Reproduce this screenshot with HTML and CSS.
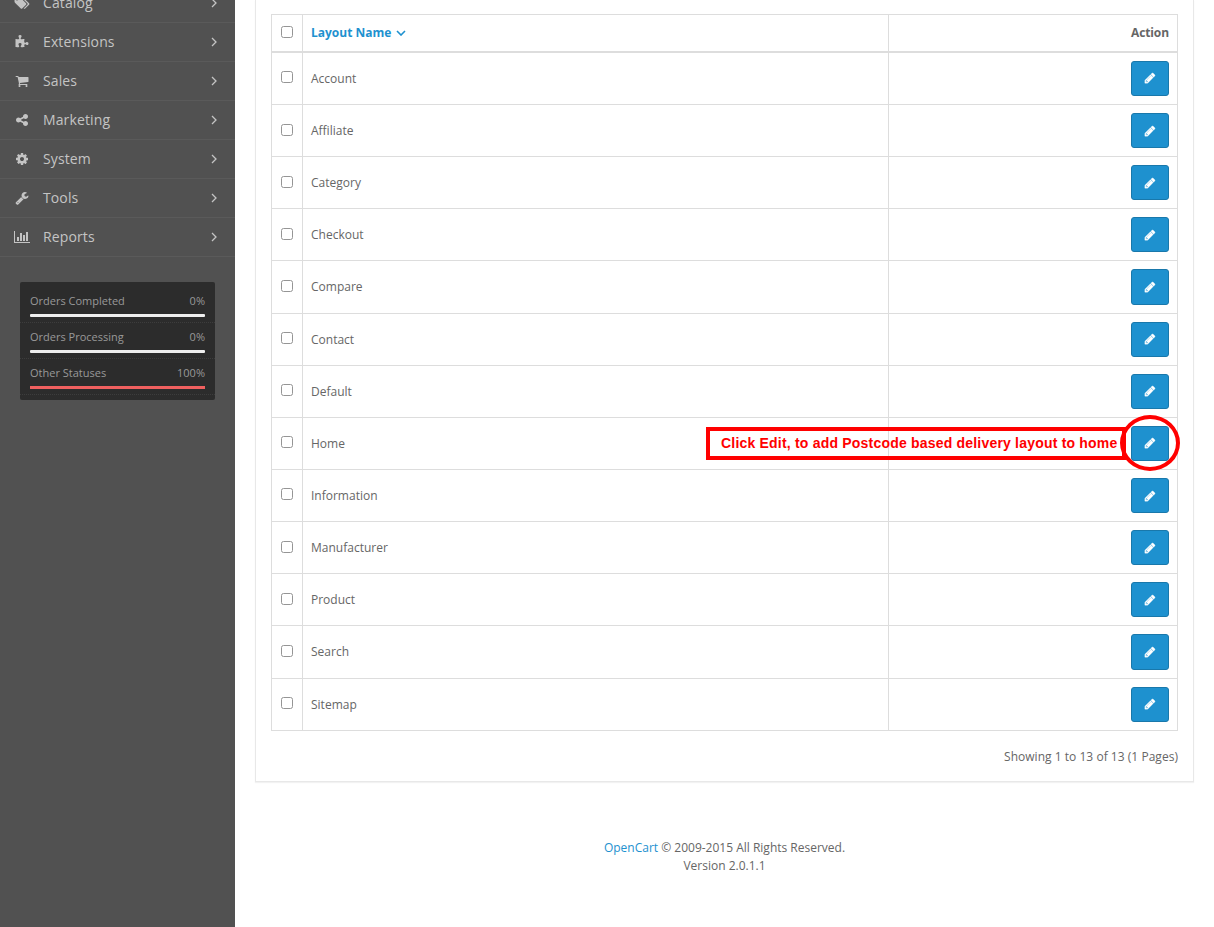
FILE: index.html
```html
<!DOCTYPE html>
<html lang="en">
<head>
<meta charset="utf-8">
<title>Layouts</title>
<link rel="stylesheet" href="styles.css">
</head>
<body>
<svg class="defs" width="0" height="0">
  <symbol id="pencil" viewBox="0 0 1792 1792"><path d="M491 1536l91-91-235-235-91 91v107h128v128h107zm523-928q0-22-22-22-10 0-17 7l-542 542q-7 7-7 17 0 22 22 22 10 0 17-7l542-542q7-7 7-17zm-54-192l416 416-832 832h-416v-416zm683 96q0 53-37 90l-166 166-416-416 166-165q36-38 90-38 53 0 91 38l235 234q37 39 37 91z"/></symbol>
  <symbol id="angle" viewBox="0 0 6 10"><path d="M1 1l4 4-4 4" fill="none" stroke="currentColor" stroke-width="1.3"/></symbol>
</svg>
<div class="page">
  <aside class="sidebar">
    <ul class="menu">
      <li><svg class="icon" viewBox="0 0 1920 1792"><path d="M448 448q0-53-37.500-90.500t-90.500-37.500-90.500 37.500-37.500 90.500 37.500 90.500 90.500 37.500 90.500-37.500 37.500-90.500zm1067 576q0 53-37 90l-491 492q-39 37-91 37-53 0-90-37l-715-716q-38-37-64.500-101t-26.500-117v-416q0-52 38-90t90-38h416q53 0 117 26.500t102 64.500l715 714q37 39 37 91zm384 0q0 53-37 90l-491 492q-39 37-91 37-36 0-59-14t-53-45l470-470q37-37 37-90 0-52-37-91l-715-714q-38-38-102-64.500t-117-26.500h224q53 0 117 26.500t102 64.500l715 714q37 39 37 91z"/></svg><span>Catalog</span><svg class="angle"><use href="#angle"/></svg></li>
      <li><svg class="icon" viewBox="0 0 1792 1792"><path d="M1728 1098q0 81-44.500 135t-123.500 54q-41 0-77.500-17.500t-59-38-56.500-38-71-17.500q-110 0-110 124 0 39 16 115t15 115v5q-22 0-33 1-34 3-97.500 11.500t-115.500 13.500-98 5q-61 0-103-26.500t-42-83.500q0-37 17.500-71t38-56.500 38-59 17.500-77.500q0-79-54-123.500t-135-44.500q-84 0-143 45.500t-59 127.500q0 43 15 83t33.500 64.500 33.500 53 15 50.500q0 45-46 89-37 35-117 35-95 0-245-24-9-2-27.500-4t-27.500-4l-13-2q-1 0-3-1-2 0-2-1v-1024q2 1 17.500 3.500t34 5 21.500 3.500q150 24 245 24 80 0 117-35 46-44 46-89 0-22-15-50.500t-33.500-53-33.500-64.500-15-83q0-82 59-127.500t144-45.500q80 0 134 44.500t54 123.500q0 41-17.500 77.500t-38 59-38 56.500-17.500 71q0 57 42 83.500t103 26.500q64 0 180-15t163-17v2q-1 2-3.500 17.500t-5 34-3.500 21.500q-24 150-24 245 0 80 35 117 44 46 89 46 22 0 50.500-15t53-33.500 64.500-33.500 83-15q82 0 127.500 59t45.500 143z"/></svg><span>Extensions</span><svg class="angle"><use href="#angle"/></svg></li>
      <li><svg class="icon" viewBox="0 0 1792 1792"><path d="M704 1536q0 52-38 90t-90 38-90-38-38-90 38-90 90-38 90 38 38 90zm896 0q0 52-38 90t-90 38-90-38-38-90 38-90 90-38 90 38 38 90zm128-1088v512q0 24-16.500 42.500t-40.500 21.500l-1044 122q13 60 13 70 0 16-24 64h920q26 0 45 19t19 45-19 45-45 19h-1024q-26 0-45-19t-19-45q0-11 8-31.500t16-36 21.500-40 15.500-29.500l-177-823h-204q-26 0-45-19t-19-45 19-45 45-19h256q16 0 28.500 6.500t19.500 15.500 13 24.500 8 26 5.500 29.500 4.500 26h1201q26 0 45 19t19 45z"/></svg><span>Sales</span><svg class="angle"><use href="#angle"/></svg></li>
      <li><svg class="icon" viewBox="0 0 1792 1792"><path d="M1344 1024q133 0 226.500 93.500t93.500 226.500-93.500 226.500-226.500 93.500-226.500-93.500-93.500-226.500q0-12 2-34l-360-180q-92 86-218 86-133 0-226.500-93.500t-93.500-226.500 93.500-226.500 226.500-93.500q126 0 218 86l360-180q-2-22-2-34 0-133 93.500-226.500t226.500-93.500 226.500 93.500 93.500 226.500-93.500 226.500-226.500 93.500q-126 0-218-86l-360 180q2 22 2 34t-2 34l360 180q92-86 218-86z"/></svg><span>Marketing</span><svg class="angle"><use href="#angle"/></svg></li>
      <li><svg class="icon" viewBox="0 0 1792 1792"><path d="M1152 896q0-106-75-181t-181-75-181 75-75 181 75 181 181 75 181-75 75-181zm512-109v222q0 12-8 23t-20 13l-185 28q-19 54-39 91 35 50 107 138 10 12 10 25t-9 23q-27 37-99 108t-94 71q-12 0-26-9l-138-108q-44 23-91 38-16 136-29 186-7 28-36 28h-222q-14 0-24.500-8.500t-11.500-21.500l-28-184q-49-16-90-37l-141 107q-10 9-25 9-14 0-25-11-126-114-165-168-7-10-7-23 0-12 8-23 15-21 51-66.500t54-70.500q-27-50-41-99l-183-27q-13-2-21-12.500t-8-23.500v-222q0-12 8-23t19-13l186-28q14-46 39-92-40-57-107-138-10-12-10-24 0-10 9-23 26-36 98.500-107.500t94.500-71.500q13 0 26 10l138 107q44-23 91-38 16-136 29-186 7-28 36-28h222q14 0 24.500 8.500t11.500 21.500l28 184q49 16 90 37l142-107q9-9 24-9 13 0 25 10 129 119 165 170 7 8 7 22 0 12-8 23-15 21-51 66.500t-54 70.500q26 50 41 98l183 28q13 2 21 12.500t8 23.500z"/></svg><span>System</span><svg class="angle"><use href="#angle"/></svg></li>
      <li><svg class="icon" viewBox="0 0 1792 1792"><path d="M448 1472q0-26-19-45t-45-19-45 19-19 45 19 45 45 19 45-19 19-45zm644-420l-682 682q-37 37-90 37-52 0-91-37l-106-108q-38-36-38-90 0-53 38-91l681-681q39 98 114.500 173.500t173.500 114.500zm634-435q0 39-23 106-47 134-164.500 217.500t-258.500 83.500q-185 0-316.500-131.500t-131.500-316.500 131.500-316.500 316.500-131.500q58 0 121.500 16.500t107.500 46.500q16 11 16 28t-16 28l-293 169v224l193 107q5-3 79-48.500t135.500-81 70.500-35.500q15 0 23.500 10t8.500 25z"/></svg><span>Tools</span><svg class="angle"><use href="#angle"/></svg></li>
      <li><svg class="icon" viewBox="0 0 2048 1792"><path d="M640 896v512h-256v-512h256zm384-512v1024h-256v-1024h256zm1024 1152v128h-2048v-1536h128v1408h1920zm-640-896v768h-256v-768h256zm384-384v1152h-256v-1152h256z"/></svg><span>Reports</span><svg class="angle"><use href="#angle"/></svg></li>
    </ul>
    <div class="stats">
      <div class="stat"><div class="stat-text"><span>Orders Completed</span><span>0%</span></div><div class="bar"></div></div>
      <div class="stat"><div class="stat-text"><span>Orders Processing</span><span>0%</span></div><div class="bar"></div></div>
      <div class="stat"><div class="stat-text"><span>Other Statuses</span><span>100%</span></div><div class="bar bar-full"></div></div>
    </div>
  </aside>
  <main class="content">
    <section class="panel">
      <div class="table">
        <div class="row head"><div class="check"><input type="checkbox"></div><div class="name"><a>Layout Name</a><svg class="caret" viewBox="0 0 10 6"><path d="M1 1l4 4 4-4"/></svg></div><div class="action">Action</div></div>
        <div class="row"><div class="check"><input type="checkbox"></div><div class="name">Account</div><div class="action"><button class="edit"><svg><use href="#pencil"/></svg></button></div></div>
        <div class="row"><div class="check"><input type="checkbox"></div><div class="name">Affiliate</div><div class="action"><button class="edit"><svg><use href="#pencil"/></svg></button></div></div>
        <div class="row"><div class="check"><input type="checkbox"></div><div class="name">Category</div><div class="action"><button class="edit"><svg><use href="#pencil"/></svg></button></div></div>
        <div class="row"><div class="check"><input type="checkbox"></div><div class="name">Checkout</div><div class="action"><button class="edit"><svg><use href="#pencil"/></svg></button></div></div>
        <div class="row"><div class="check"><input type="checkbox"></div><div class="name">Compare</div><div class="action"><button class="edit"><svg><use href="#pencil"/></svg></button></div></div>
        <div class="row"><div class="check"><input type="checkbox"></div><div class="name">Contact</div><div class="action"><button class="edit"><svg><use href="#pencil"/></svg></button></div></div>
        <div class="row"><div class="check"><input type="checkbox"></div><div class="name">Default</div><div class="action"><button class="edit"><svg><use href="#pencil"/></svg></button></div></div>
        <div class="row"><div class="check"><input type="checkbox"></div><div class="name">Home</div><div class="action"><button class="edit"><svg><use href="#pencil"/></svg></button></div></div>
        <div class="row"><div class="check"><input type="checkbox"></div><div class="name">Information</div><div class="action"><button class="edit"><svg><use href="#pencil"/></svg></button></div></div>
        <div class="row"><div class="check"><input type="checkbox"></div><div class="name">Manufacturer</div><div class="action"><button class="edit"><svg><use href="#pencil"/></svg></button></div></div>
        <div class="row"><div class="check"><input type="checkbox"></div><div class="name">Product</div><div class="action"><button class="edit"><svg><use href="#pencil"/></svg></button></div></div>
        <div class="row"><div class="check"><input type="checkbox"></div><div class="name">Search</div><div class="action"><button class="edit"><svg><use href="#pencil"/></svg></button></div></div>
        <div class="row"><div class="check"><input type="checkbox"></div><div class="name">Sitemap</div><div class="action"><button class="edit"><svg><use href="#pencil"/></svg></button></div></div>
      </div>
      <div class="results">Showing 1 to 13 of 13 (1 Pages)</div>
    </section>
    <footer class="footer"><a>OpenCart</a> © 2009-2015 All Rights Reserved.<br>Version 2.0.1.1</footer>
  </main>
  <div class="callout">Click Edit, to add Postcode based delivery layout to home</div>
  <div class="ring"></div>
</div>
</body>
</html>
```
FILE: styles.css
```css
* { box-sizing: border-box; }
body {
  margin: 0;
  font-family: "Open Sans", "Noto Sans", sans-serif;
  font-size: 12px;
  line-height: 17.14px;
  color: #666;
  background: #fff;
}
.defs { position: absolute; }
.page { display: flex; position: relative; height: 927px; overflow: hidden; }

.sidebar { width: 235px; flex: none; background: #515151; }
.menu { list-style: none; margin: -16px 0 0; padding: 0; }
.menu li {
  display: flex;
  align-items: center;
  height: 39px;
  padding: 0 18px 0 12px;
  border-bottom: 1px solid #5a5a5a;
  color: #c4c4c4;
  font-size: 14px;
  line-height: 20px;
  letter-spacing: .12px;
}
.menu span { flex: 1; padding-left: 11px; }
.icon { width: 20px; height: 14px; fill: currentColor; }
.angle { width: 6px; height: 10px; }

.stats {
  margin: 25px 20px 0;
  height: 118px;
  padding-top: 5px;
  background: #2c2c2c;
  border-radius: 2px;
}
.stat { height: 36px; padding: 5px 10px 0; border-bottom: 1px dotted #3d3d3d; }
.stat-text { display: flex; justify-content: space-between; height: 22px; font-size: 11px; line-height: 18px; color: #999; }
.bar { height: 3px; background: #efefef; border-radius: 1px; }
.bar-full { background: #f0605f; border-radius: 0; }

.content { flex: 1; padding: 0 20px; }
.panel {
  height: 782px;
  width: 939px;
  padding: 14px 15px 0;
  border: 1px solid #e8e8e8;
  border-top: 0;
  box-shadow: 0 1px 1px rgba(0, 0, 0, .05);
}
.table { width: 907px; border: 1px solid #ddd; border-bottom: 0; }
.row { display: grid; grid-template-columns: 30px 586px 1fr; height: 52.15px; border-bottom: 1px solid #ddd; }
.row > div { padding: 8px; }
.row > div + div { border-left: 1px solid #ddd; }
.row > .name { display: flex; align-items: center; }
.row > .action { display: flex; justify-content: flex-end; }
.check { display: flex; }
.check input {
  appearance: none;
  flex: none;
  width: 12px;
  height: 12px;
  margin: 10.5px 0 0 1px;
  border: 1px solid #959595;
  border-radius: 2.5px;
  background: #fff;
}
.head { height: 37.87px; border-bottom-width: 2px; font-weight: bold; }
.head .check input { margin-top: 3px; }
.head .action { padding-top: 9px; letter-spacing: -.1px; }
.head a { color: #1e91cf; }
.caret { width: 10px; height: 6px; margin-left: 5px; fill: none; stroke: #1e91cf; stroke-width: 1.6; }
.edit {
  display: flex;
  align-items: center;
  justify-content: center;
  width: 38px;
  height: 35.14px;
  padding: 0;
  background: #1e91cf;
  border: 1px solid #1978ab;
  border-radius: 3px;
  color: #fff;
}
.edit svg { width: 12px; height: 12px; fill: #fff; stroke: #fff; stroke-width: 50; }
.results { margin-top: 17px; text-align: right; letter-spacing: .03px; }

.footer { width: 939px; margin-top: 57px; text-align: center; line-height: 18px; }
.footer a { color: #1e91cf; }

/* Annotation laid over the table */
.callout {
  position: absolute;
  left: 706px;
  top: 427px;
  width: 420px;
  height: 33px;
  padding-left: 11px;
  border: 4px solid #f00;
  color: #f00;
  font: bold 14px/25px "Liberation Sans", Arial, sans-serif;
  letter-spacing: .2px;
  white-space: nowrap;
}
.ring {
  position: absolute;
  left: 1120px;
  top: 415px;
  width: 60px;
  height: 56px;
  border: 4px solid #f00;
  border-radius: 50%;
}
```
